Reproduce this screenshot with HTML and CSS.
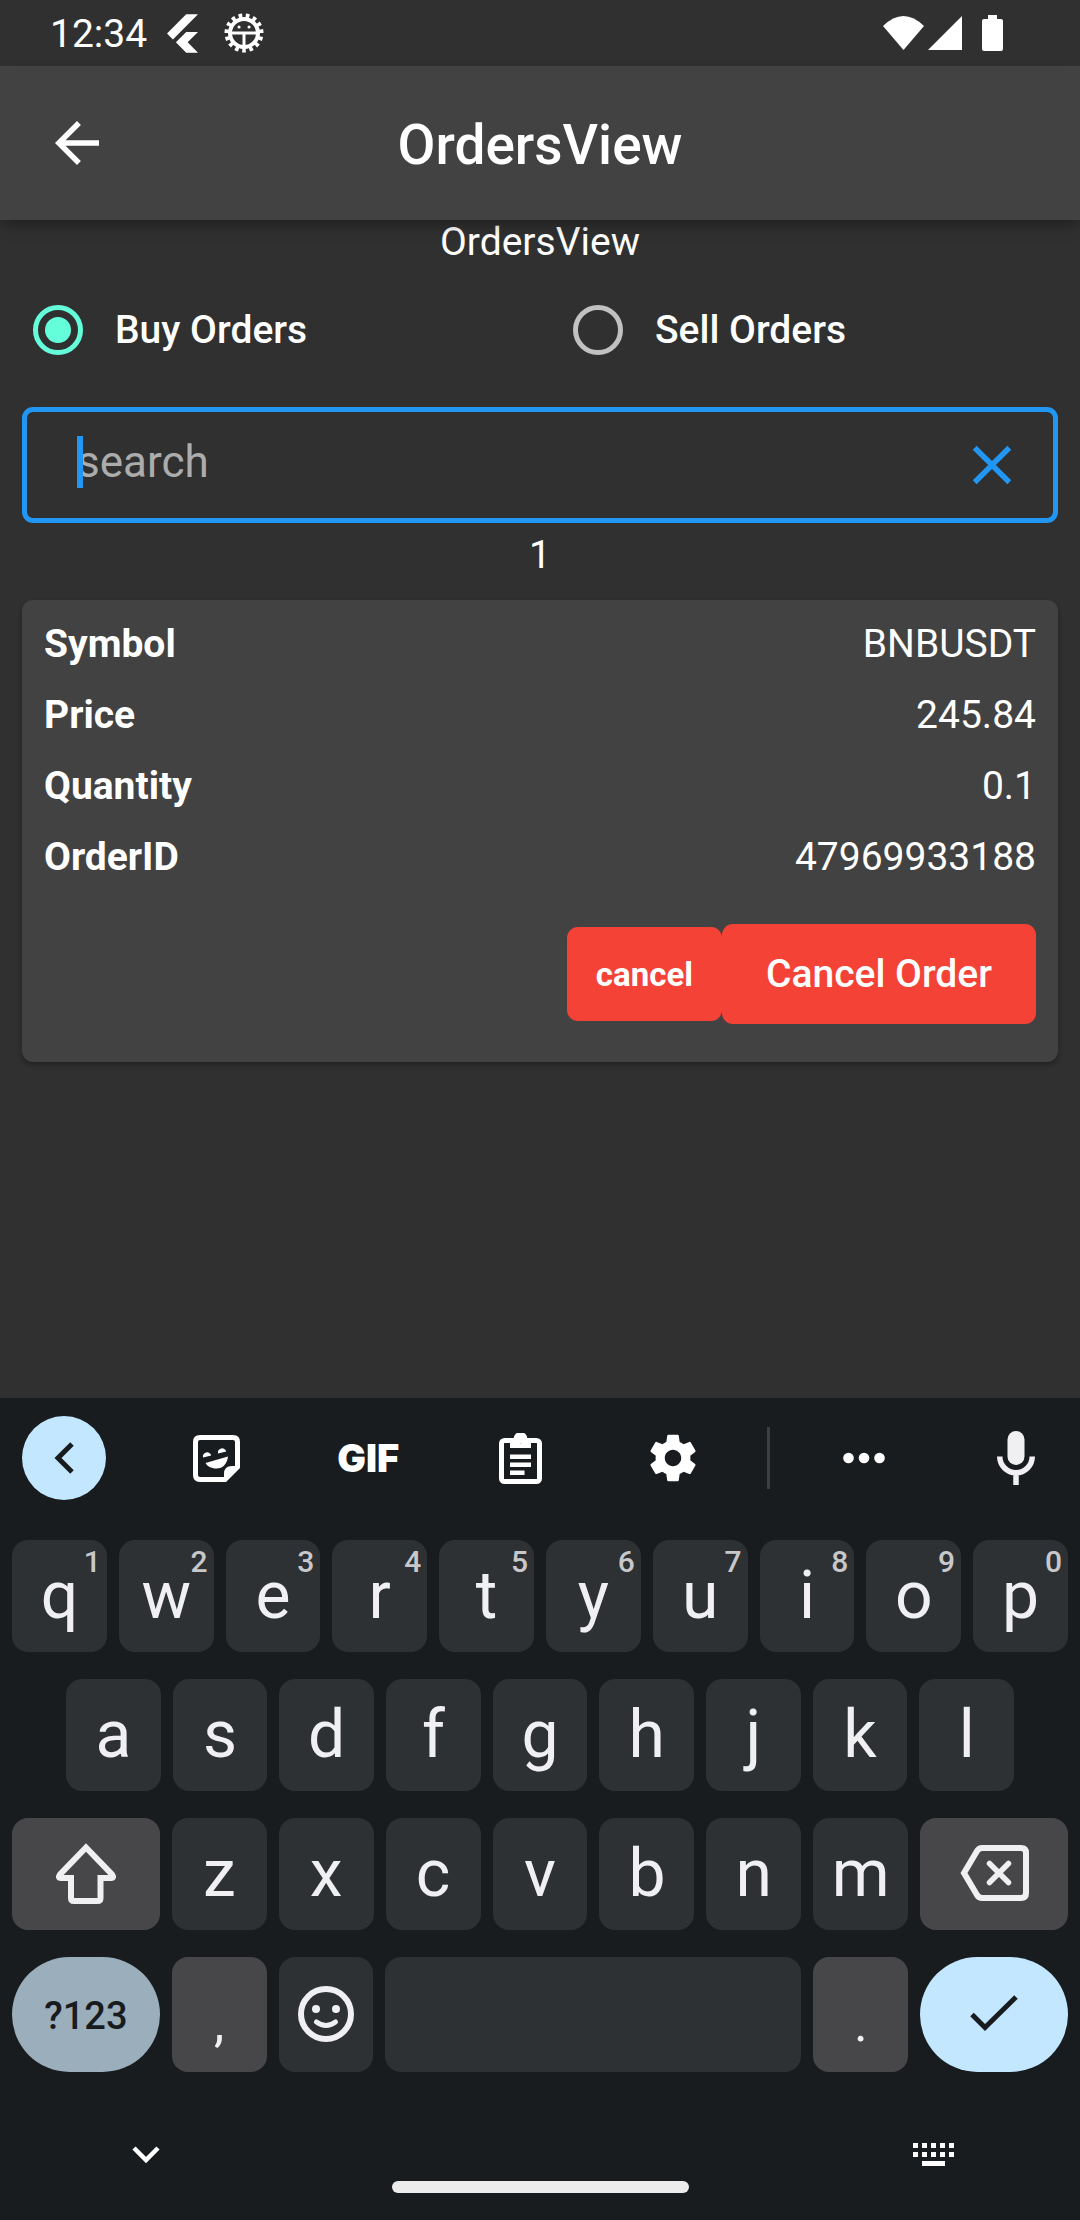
FILE: index.html
```html
<!DOCTYPE html>
<html lang="en">
<head>
<meta charset="utf-8">
<meta name="viewport" content="width=device-width, initial-scale=1">
<title>OrdersView</title>
<link rel="stylesheet" href="styles.css">
</head>
<body>
<div class="status-bar">
  <span class="clock">12:34</span>
  <svg class="status-flutter" width="31" height="39" viewBox="2.3 0 19.4 24" aria-hidden="true"><path fill="currentColor" d="M14.314 0L2.3 12 6 15.7 21.684.013h-7.357zm.014 11.072L7.857 17.53l6.47 6.47H21.7l-6.46-6.468 6.46-6.46h-7.37z"/></svg>
  <svg class="status-debug" width="40" height="40" viewBox="0 0 40 40" fill="none" stroke="currentColor" aria-hidden="true">
    <circle cx="20" cy="20" r="17" stroke-width="5" pathLength="30" stroke-dasharray="1 1" stroke-dashoffset="1"/>
    <circle cx="20" cy="20" r="14" stroke-width="4"/>
    <path stroke-width="3" d="M6 20H34M20 20V34"/>
    <path stroke-width="3" stroke-linecap="round" d="M15 14h.1M25 14h.1"/>
  </svg>
  <div class="status-right">
    <svg width="41" height="34" viewBox="0 0 41 34" aria-hidden="true"><path fill="currentColor" d="M0 10Q20.500-10 41 10L20.500 34Z"/></svg>
    <svg width="34" height="34" viewBox="0 0 34 34" aria-hidden="true"><path fill="currentColor" d="M34 0V34H0Z"/></svg>
    <svg class="status-battery" width="21" height="36" viewBox="0 0 21 36" aria-hidden="true"><path fill="currentColor" d="M6 0H15V4H19Q21 4 21 6V34Q21 36 19 36H2Q0 36 0 34V6Q0 4 2 4H6Z"/></svg>
  </div>
</div>

<header class="app-bar">
  <button class="icon-button" type="button" aria-label="Back">
    <svg width="66" height="66" viewBox="0 0 24 24" aria-hidden="true"><path fill="currentColor" d="M20 11H7.830l5.590-5.590L12 4l-8 8 8 8 1.410-1.410L7.830 13H20v-2z"/></svg>
  </button>
  <h1 class="app-title">OrdersView</h1>
</header>

<main class="content">
  <p class="line">OrdersView</p>

  <div class="side-picker" role="radiogroup" aria-label="Order side">
    <label class="side-option"><input class="radio" type="radio" name="side" checked>Buy Orders</label>
    <label class="side-option"><input class="radio" type="radio" name="side">Sell Orders</label>
  </div>

  <div class="search">
    <div class="search-entry">
      <input class="search-input" type="text" placeholder="search" aria-label="Search orders">
      <span class="caret"></span>
    </div>
    <button class="icon-button search-clear" type="button" aria-label="Clear search">
      <svg width="66" height="66" viewBox="0 0 24 24" aria-hidden="true"><path fill="currentColor" d="M19 6.410L17.590 5 12 10.590 6.410 5 5 6.410 10.590 12 5 17.590 6.410 19 12 13.410 17.590 19 19 17.590 13.410 12z"/></svg>
    </button>
  </div>

  <p class="line">1</p>

  <section class="order-card">
    <dl class="order-fields">
      <div class="field"><dt>Symbol</dt><dd>BNBUSDT</dd></div>
      <div class="field"><dt>Price</dt><dd>245.84</dd></div>
      <div class="field"><dt>Quantity</dt><dd>0.1</dd></div>
      <div class="field"><dt>OrderID</dt><dd>47969933188</dd></div>
    </dl>
    <div class="order-actions">
      <button class="action action-small" type="button">cancel</button>
      <button class="action action-large" type="button">Cancel Order</button>
    </div>
  </section>
</main>

<section class="keyboard" aria-label="Keyboard">
  <div class="toolbar">
    <button class="tool tool-round" type="button" aria-label="Collapse toolbar">
      <svg width="20" height="32" viewBox="0 0 20 32" aria-hidden="true"><path fill="none" stroke="currentColor" stroke-width="5" d="M18 2L4 16L18 30"/></svg>
    </button>
    <button class="tool" type="button" aria-label="Stickers">
      <svg width="47" height="47" viewBox="0 0 47 47" fill="currentColor" aria-hidden="true">
        <path fill="none" stroke="currentColor" stroke-width="5" d="M40 2.500H7Q2.500 2.500 2.500 7V40Q2.500 44.500 7 44.500H32L44.500 32V7Q44.500 2.500 40 2.500Z"/>
        <path d="M31 46V39Q31 31 39 31H46Z"/>
        <path d="M10 22.500a4.200 4.200 0 0 1 8.200-2zM25 18.500a4.200 4.200 0 0 1 8.200-2zM12.500 28L35 21.500C34 29 30 33.500 23.500 33.500C18 33.500 14 31 12.500 28Z"/>
      </svg>
    </button>
    <button class="tool tool-gif" type="button">GIF</button>
    <button class="tool" type="button" aria-label="Clipboard">
      <svg width="43" height="51" viewBox="0 0 43 51" aria-hidden="true">
        <rect x="2.500" y="7.500" width="38" height="41" rx="3" fill="none" stroke="currentColor" stroke-width="5"/>
        <path fill="currentColor" fill-rule="evenodd" d="M11 6H14.500A7 7 0 0 1 28.500 6H32V15H11ZM21.500 5a2.600 2.600 0 1 0 .01 0ZM11 21.500H32V26H11ZM11 29.500H32V34H11ZM11 37.500H25.500V42H11Z"/>
      </svg>
    </button>
    <button class="tool" type="button" aria-label="Settings">
      <svg width="58" height="58" viewBox="0 0 24 24" aria-hidden="true"><path fill="currentColor" d="M19.140 12.940c.04-.3.06-.61.06-.94 0-.32-.02-.64-.07-.94l2.030-1.580c.18-.14.23-.41.12-.61l-1.920-3.320c-.12-.22-.37-.29-.59-.22l-2.390.96c-.5-.38-1.030-.7-1.620-.94l-.36-2.540c-.04-.24-.24-.41-.48-.41h-3.840c-.24 0-.43.17-.47.41l-.36 2.540c-.59.24-1.130.57-1.620.94l-2.390-.96c-.22-.08-.47 0-.59.22L2.740 8.870c-.12.21-.08.47.12.61l2.030 1.580c-.05.3-.09.63-.09.94s.02.64.07.94l-2.030 1.580c-.18.14-.23.41-.12.61l1.920 3.320c.12.22.37.29.59.22l2.390-.96c.5.38 1.030.7 1.620.94l.36 2.540c.05.24.24.41.48.41h3.840c.24 0 .44-.17.47-.41l.36-2.540c.59-.24 1.130-.56 1.620-.94l2.390.96c.22.08.47 0 .59-.22l1.920-3.320c.12-.22.07-.47-.12-.61l-2.010-1.580zM12 15.400c-1.880 0-3.400-1.520-3.400-3.400s1.520-3.400 3.400-3.400 3.400 1.520 3.400 3.400-1.520 3.400-3.400 3.400z"/></svg>
    </button>
    <span class="tool-divider"></span>
    <button class="tool" type="button" aria-label="More">
      <svg width="42" height="12" viewBox="0 0 42 12" fill="currentColor" aria-hidden="true"><circle cx="5.500" cy="6" r="5.300"/><circle cx="21" cy="6" r="5.300"/><circle cx="36.500" cy="6" r="5.300"/></svg>
    </button>
    <button class="tool tool-mic" type="button" aria-label="Voice input">
      <svg width="38" height="54" viewBox="0 0 38 54" aria-hidden="true"><rect x="10.500" y="0" width="17" height="34" rx="8.500" fill="currentColor"/><path fill="none" stroke="currentColor" stroke-width="5.500" d="M2.750 25.500a16.250 16.250 0 0 0 32.500 0M19 42V54"/></svg>
    </button>
  </div>

  <div class="keys">
    <div class="key-row">
      <button class="key" type="button">q<span class="hint">1</span></button>
      <button class="key" type="button">w<span class="hint">2</span></button>
      <button class="key" type="button">e<span class="hint">3</span></button>
      <button class="key" type="button">r<span class="hint">4</span></button>
      <button class="key" type="button">t<span class="hint">5</span></button>
      <button class="key" type="button">y<span class="hint">6</span></button>
      <button class="key" type="button">u<span class="hint">7</span></button>
      <button class="key" type="button">i<span class="hint">8</span></button>
      <button class="key" type="button">o<span class="hint">9</span></button>
      <button class="key" type="button">p<span class="hint">0</span></button>
    </div>
    <div class="key-row key-row-inset">
      <button class="key" type="button">a</button>
      <button class="key" type="button">s</button>
      <button class="key" type="button">d</button>
      <button class="key" type="button">f</button>
      <button class="key" type="button">g</button>
      <button class="key" type="button">h</button>
      <button class="key" type="button">j</button>
      <button class="key" type="button">k</button>
      <button class="key" type="button">l</button>
    </div>
    <div class="key-row">
      <button class="key key-wide key-gray" type="button" aria-label="Shift">
        <svg width="62" height="61" viewBox="0 0 62 61" aria-hidden="true"><path fill="none" stroke="currentColor" stroke-width="6" d="M31 4.500L57 31.500Q59.500 35 56 35H45.500V55Q45.500 58 42.500 58H19Q16 58 16 55V35H6Q2.500 35 5 31.500Z"/></svg>
      </button>
      <button class="key" type="button">z</button>
      <button class="key" type="button">x</button>
      <button class="key" type="button">c</button>
      <button class="key" type="button">v</button>
      <button class="key" type="button">b</button>
      <button class="key" type="button">n</button>
      <button class="key" type="button">m</button>
      <button class="key key-wide key-gray" type="button" aria-label="Backspace">
        <svg width="69" height="56" viewBox="0 0 69 56" fill="none" stroke="currentColor" aria-hidden="true"><path stroke-width="6" d="M22 3H61Q66 3 66 8V48Q66 53 61 53H22Q19 53 17 50L4 28L17 6Q19 3 22 3Z"/><path stroke-width="5.500" stroke-linecap="round" d="M29.500 18.500L48.500 37.500M48.500 18.500L29.500 37.500"/></svg>
      </button>
    </div>
    <div class="key-row key-row-last">
      <button class="key key-wide key-symbols" type="button">?123</button>
      <button class="key key-gray key-punct" type="button">,</button>
      <button class="key" type="button" aria-label="Emoji">
        <svg width="56" height="56" viewBox="0 0 56 56" fill="none" stroke="currentColor" aria-hidden="true"><circle cx="28" cy="28" r="25" stroke-width="6"/><path stroke-width="5" stroke-linecap="round" d="M18.500 36Q28 43 37.500 36"/><circle cx="18" cy="23" r="4" fill="currentColor" stroke="none"/><circle cx="38" cy="23" r="4" fill="currentColor" stroke="none"/></svg>
      </button>
      <button class="key key-space" type="button" aria-label="Space"></button>
      <button class="key key-gray key-punct" type="button">.</button>
      <button class="key key-wide key-done" type="button" aria-label="Done">
        <svg width="48" height="37" viewBox="0 0 48 37" aria-hidden="true"><path fill="none" stroke="currentColor" stroke-width="5" d="M2 19.500L15 32.500L46 2"/></svg>
      </button>
    </div>
  </div>

  <nav class="system-nav">
    <button class="icon-button" type="button" aria-label="Hide keyboard">
      <svg width="28" height="18" viewBox="0 0 28 18" aria-hidden="true"><path fill="none" stroke="currentColor" stroke-width="4.500" d="M2 2L14 14L26 2"/></svg>
    </button>
    <span class="home-pill"></span>
    <button class="icon-button" type="button" aria-label="Switch keyboard">
      <svg width="42" height="24" viewBox="0 0 42 24" aria-hidden="true"><path fill="currentColor" d="M0 0h5v5h-5zM9 0h5v5h-5zM18 0h5v5h-5zM27 0h5v5h-5zM36 0h5v5h-5zM0 9h5v5h-5zM9 9h5v5h-5zM18 9h5v5h-5zM27 9h5v5h-5zM36 9h5v5h-5zM9 18h23v5H9z"/></svg>
    </button>
  </nav>
</section>
</body>
</html>
```
FILE: styles.css
```css
* {
  box-sizing: border-box;
}

body {
  margin: 0;
  min-height: 100vh;
  display: flex;
  flex-direction: column;
  background: #303030;
  color: #fff;
  font-family: Roboto, "Liberation Sans", sans-serif;
  font-size: 39px;
  line-height: 45px;
}

button {
  margin: 0;
  padding: 0;
  border: 0;
  background: none;
  color: inherit;
  font: inherit;
  display: flex;
  align-items: center;
  justify-content: center;
}

svg {
  display: block;
  flex: none;
}

/* Status bar */
.status-bar {
  display: flex;
  align-items: center;
  height: 66px;
  padding: 0 77px 0 50px;
}

.clock {
  padding-top: 2px;
}

.status-flutter {
  margin-left: 20px;
}

.status-debug {
  margin-left: 26px;
}

.status-right {
  display: flex;
  align-items: center;
  gap: 4px;
  margin-left: auto;
}

.status-battery {
  margin-left: 16px;
}

/* App bar */
.app-bar {
  position: relative;
  z-index: 1;
  display: grid;
  grid-template-columns: 66px 1fr 66px;
  align-items: center;
  height: 154px;
  padding: 0 44px;
  background: #424242;
  box-shadow: 0 7px 14px -2px rgba(0, 0, 0, 0.35);
}

.app-title {
  margin: 0;
  padding-top: 4px;
  font-size: 55px;
  font-weight: 500;
  line-height: 66px;
  text-align: center;
}

.icon-button {
  width: 66px;
  height: 66px;
}

/* Orders */
.line {
  margin: 0;
  text-align: center;
}

.side-picker {
  display: grid;
  grid-template-columns: 1fr 1fr;
}

.side-option {
  display: flex;
  align-items: center;
  gap: 32px;
  height: 130px;
  padding-left: 33px;
  font-weight: 500;
}

.radio {
  appearance: none;
  display: grid;
  place-items: center;
  width: 50px;
  height: 50px;
  margin: 0;
  border: 5px solid #c1c1c1;
  border-radius: 50%;
}

.radio:checked {
  border-color: #64ffda;
}

.radio:checked::before {
  content: "";
  width: 26px;
  height: 26px;
  border-radius: 50%;
  background: #64ffda;
}

.search {
  display: flex;
  align-items: center;
  height: 116px;
  margin: 12px 22px 10px;
  padding: 0 28px 0 50px;
  border: 5px solid #2196f3;
  border-radius: 11px;
}

.search-entry {
  position: relative;
  flex: 1;
  padding-bottom: 6px;
}

.search-input {
  display: block;
  width: 100%;
  height: 52px;
  padding: 0;
  border: 0;
  outline: 0;
  background: none;
  color: #fff;
  font: inherit;
  font-size: 44px;
}

.search-input::placeholder {
  color: #acacac;
  opacity: 1;
}

.caret {
  position: absolute;
  left: 0;
  top: 0;
  width: 6px;
  height: 52px;
  background: #2196f3;
}

.search-clear {
  color: #2196f3;
}

.order-card {
  margin: 22px 22px 44px;
  padding: 22px 22px 38px;
  border-radius: 11px;
  background: #424242;
  box-shadow: 0 3px 5px rgba(0, 0, 0, 0.3);
}

.order-fields {
  display: grid;
  gap: 26px;
  margin: 0;
}

.field {
  display: flex;
  justify-content: space-between;
}

.field dt {
  font-weight: 700;
}

.field dd {
  margin: 0;
}

.order-actions {
  display: flex;
  align-items: center;
  justify-content: flex-end;
  margin-top: 44px;
}

.action {
  border-radius: 11px;
  background: #f44336;
}

.action-small {
  height: 94px;
  padding: 0 29px;
  font-size: 33px;
  font-weight: 700;
}

.action-large {
  height: 100px;
  padding: 0 44px;
  font-weight: 500;
}

/* Keyboard */
.keyboard {
  margin-top: auto;
  background: #191c1f;
  color: #f0eff2;
}

.toolbar {
  display: flex;
  align-items: center;
  justify-content: space-between;
  padding: 18px 22px 40px;
  color: #fff;
}

.tool {
  width: 84px;
  height: 84px;
}

.tool-round {
  border-radius: 50%;
  background: #c2e7ff;
  color: #191c1f;
}

.tool-gif {
  font-family: Inter, Roboto, sans-serif;
  font-size: 38px;
  font-weight: 900;
}

.tool-mic {
  color: #f0eff2;
}

.tool-divider {
  width: 3px;
  height: 62px;
  margin: 0 -16px;
  background: #3c3f42;
}

.keys {
  display: grid;
  gap: 27px;
  padding: 0 12px;
}

.key-row {
  display: flex;
  gap: 12px;
  height: 112px;
}

.key-row-inset {
  padding: 0 54px;
}

.key-row-last {
  height: 115px;
}

.key {
  position: relative;
  flex: 1 1 0;
  padding-bottom: 2px;
  border-radius: 16px;
  background: #2d3134;
  font-size: 66px;
}

.key-row .key-wide {
  flex: none;
  width: 14%;
}

.key-gray {
  background: #474749;
}

.key-symbols {
  padding: 4px 0 0;
  border-radius: 58px;
  background: #9baebb;
  color: #191c1f;
  font-size: 38px;
  font-weight: 500;
}

.key-punct {
  padding: 18px 0 0;
  font-size: 52px;
}

.key-row .key-space {
  flex: none;
  width: 416px;
}

.key-done {
  border-radius: 58px;
  background: #c2e7ff;
  color: #191c1f;
}

.hint {
  position: absolute;
  top: 3px;
  right: 6px;
  color: #c8c8ca;
  font-size: 30px;
  font-weight: 500;
  line-height: 38px;
}

.system-nav {
  display: flex;
  justify-content: space-between;
  height: 148px;
  padding: 50px 113px 27px;
  color: #fff;
}

.home-pill {
  align-self: flex-end;
  width: 297px;
  height: 12px;
  border-radius: 6px;
  background: #ececec;
}
```
